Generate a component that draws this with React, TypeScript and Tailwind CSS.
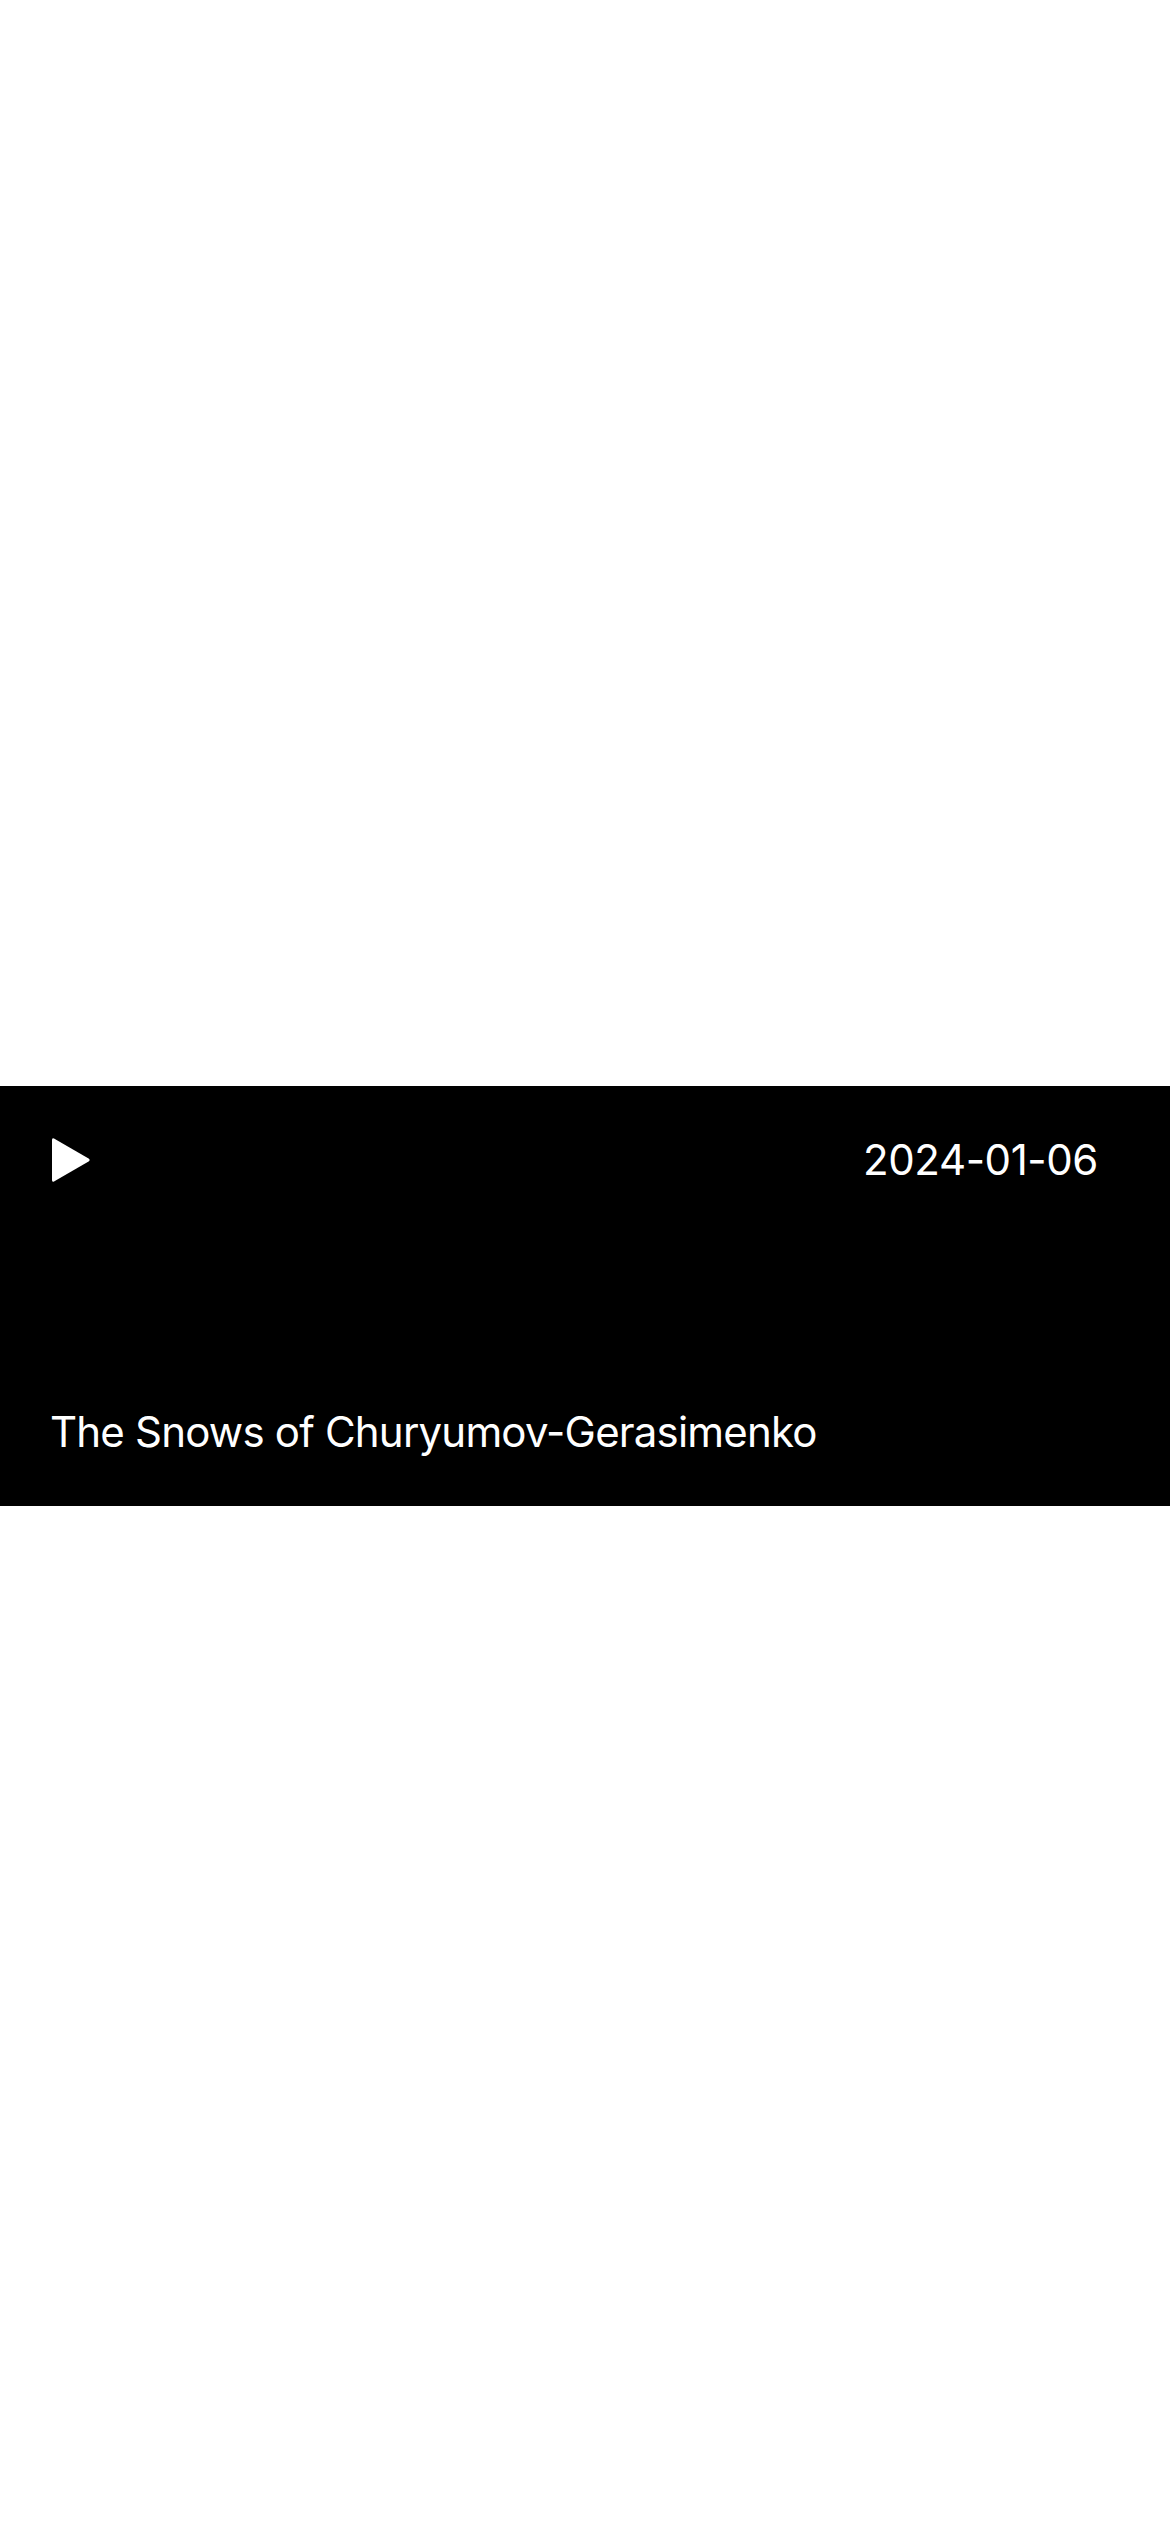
export default function App() {
  return (
    <div className="min-h-[2532px] w-full bg-white pt-[1086px]" style={{ fontFamily: 'Inter, "Liberation Sans", sans-serif' }}>
      <div className="flex h-[420px] w-full flex-col justify-between bg-black pb-[49px] pl-[50px] pr-[72px] pt-[51px] text-white">
        <div className="flex h-[45px] items-center justify-between">
          <svg width="40" height="46" viewBox="0 0 40 46" aria-label="Play" className="ml-[1px]">
            <path d="M3 1.5 Q1 0.5 1 3 L1 43 Q1 45.5 3 44.5 L38 24.2 Q39.5 23 38 21.8 Z" fill="white" />
          </svg>
          <div className="text-[42px] leading-[50px] tracking-[-0.4px]">2024-01-06</div>
        </div>
        <div className="text-[42px] leading-[50px] tracking-[-0.8px]">The Snows of Churyumov-Gerasimenko</div>
      </div>
    </div>
  );
}
